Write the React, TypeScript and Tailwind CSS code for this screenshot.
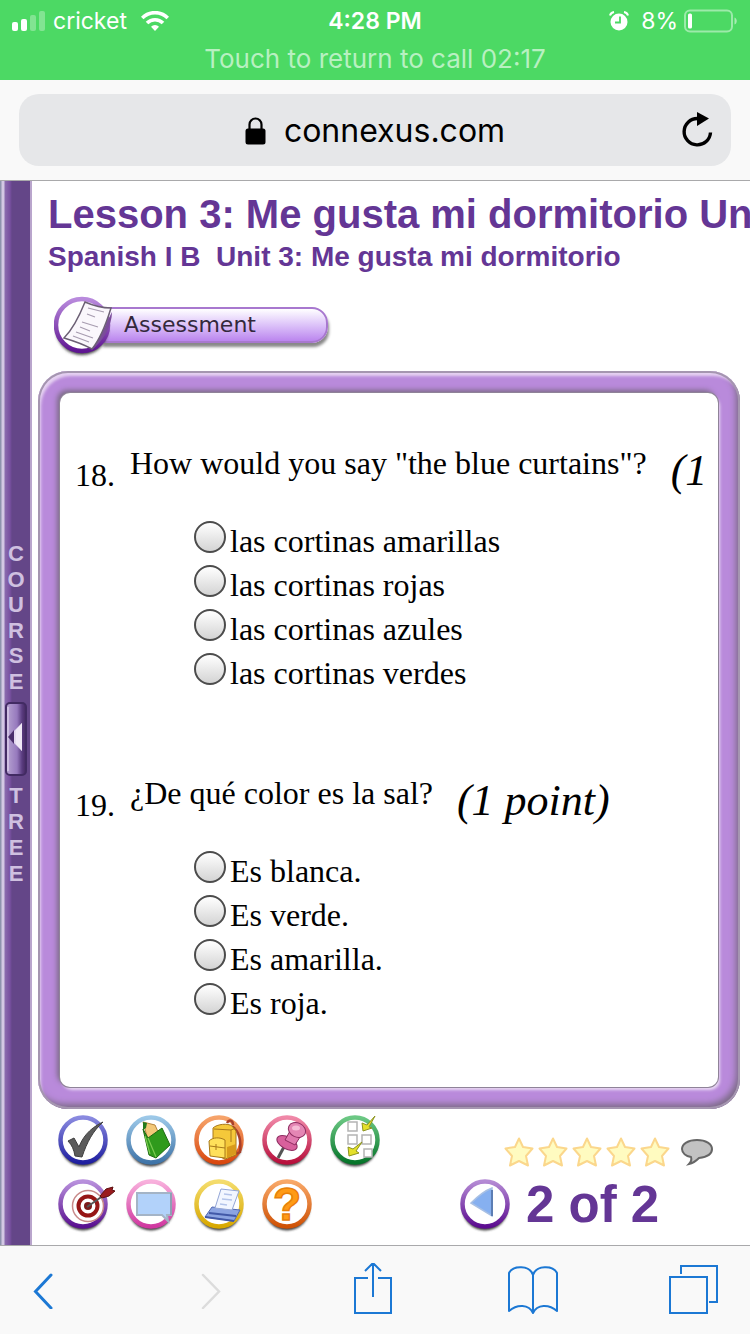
import type { ReactNode } from "react"

const questions = [
  {
    number: 18,
    text: 'How would you say "the blue curtains"?',
    points: "(1",
    options: [
      "las cortinas amarillas",
      "las cortinas rojas",
      "las cortinas azules",
      "las cortinas verdes",
    ],
  },
  {
    number: 19,
    text: "¿De qué color es la sal?",
    points: "(1 point)",
    options: ["Es blanca.", "Es verde.", "Es amarilla.", "Es roja."],
  },
]

function StatusBar() {
  return (
    <header className="bg-[#4cd964] px-3 pb-1 pt-1 font-['Inter','Liberation_Sans',sans-serif] text-white">
      <div className="grid h-8 grid-cols-3 items-center text-[23px]">
        <div className="flex items-center gap-2">
          <svg width="33" height="20" viewBox="0 0 33 20" fill="#fff">
            <rect x="0" y="11" width="6" height="9" rx="2" />
            <rect x="9" y="8" width="6" height="12" rx="2" />
            <rect x="18" y="4" width="6" height="16" rx="2" opacity="0.3" />
            <rect x="27" y="0" width="6" height="20" rx="2" opacity="0.3" />
          </svg>
          <span>cricket</span>
          <svg className="ml-1.5" width="28" height="20" viewBox="0 0 28 20" fill="none" stroke="#fff">
            <path d="M1.200 7a18 18 0 0 1 25.600 0" strokeWidth="3.600" />
            <path d="M6 12a11.300 11.300 0 0 1 16 0" strokeWidth="3.600" />
            <path d="M14 20l-4-4.200a5.600 5.600 0 0 1 8 0z" fill="#fff" stroke="none" />
          </svg>
        </div>
        <div className="text-center font-semibold">4:28 PM</div>
        <div className="flex items-center justify-end">
          <svg width="20" height="20" viewBox="0 0 20 20">
            <circle cx="10" cy="11" r="8.500" fill="#fff" />
            <path d="M1 4.500A5 5 0 0 1 5 1M19 4.500A5 5 0 0 0 15 1" stroke="#fff" strokeWidth="2" fill="none" />
            <path d="M11 5.500v6H6" stroke="#4cd964" strokeWidth="1.800" fill="none" />
          </svg>
          <span className="ml-3">8%</span>
          <svg className="ml-1.5" width="54" height="24" viewBox="0 0 54 24">
            <rect x="1" y="1.500" width="47" height="21" rx="5" fill="none" stroke="#fff" strokeOpacity="0.45" strokeWidth="2" />
            <rect x="4" y="4.500" width="4" height="15" rx="1.500" fill="#fff" />
            <path d="M50.500 8.500c3 1 3 6 0 7z" fill="#fff" opacity="0.5" />
          </svg>
        </div>
      </div>
      <div className="h-10 text-center text-[26px] leading-[46px] text-[#b8f0c1]">
        Touch to return to call 02:17
      </div>
    </header>
  )
}

function AddressBar() {
  return (
    <div className="border-b border-[#a9a9ab] bg-[#f9f9f9] px-[19px] py-3.5">
      <div className="flex h-[72px] items-center rounded-[20px] bg-[#e6e7e9] pr-[18px]">
        <div className="flex flex-1 items-center justify-center gap-[18px] pl-[50px] pt-0.5 font-['Inter','Liberation_Sans',sans-serif] text-[32px]">
          <svg width="21" height="28" viewBox="0 0 21 28">
            <path d="M4.500 13V7.500a6 6 0 0 1 12 0V13" fill="none" stroke="#000" strokeWidth="2.200" />
            <rect x="0.500" y="11.500" width="20" height="16" rx="2.500" />
          </svg>
          <span>connexus.com</span>
        </div>
        <button aria-label="Reload">
          <svg width="32" height="36" viewBox="0 0 32 36">
            <path d="M16.500 6.500A13.200 13.200 0 1 0 29.500 20.500" fill="none" stroke="#000" strokeWidth="3.400" />
            <path d="M16 0l12 6.500-12 7.500z" />
          </svg>
        </button>
      </div>
    </div>
  )
}

function VerticalWord({ word, className }: { word: string; className: string }) {
  return (
    <div className={className}>
      {word.split("").map((letter, i) => (
        <span key={i}>{letter}</span>
      ))}
    </div>
  )
}

function CourseTree() {
  return (
    <aside className="flex w-8 shrink-0 flex-col items-center justify-center border-r-2 border-[#b9a5cc] bg-[linear-gradient(to_right,#8d93ad_0_1px,#d3c8e4_2px_4px,#8a6bae_5px,#7850a0_10px,#644688_12px)] pl-0.5 pt-0.5 font-['Liberation_Sans',sans-serif] text-[22px] font-bold leading-5 text-[#cfc0e0]">
      <VerticalWord word="COURSE" className="flex h-[148px] flex-col items-center justify-between" />
      <button aria-label="Toggle course tree" className="my-2.5">
        <svg width="22" height="74" viewBox="0 0 22 74">
          <defs>
            <linearGradient id="handle">
              <stop offset="0" stopColor="#b9a6d3" />
              <stop offset="0.550" stopColor="#9679bd" />
              <stop offset="0.800" stopColor="#5a3c80" />
              <stop offset="1" stopColor="#44285f" />
            </linearGradient>
          </defs>
          <rect x="1" y="1" width="20" height="72" rx="4" fill="url(#handle)" stroke="#422b63" strokeWidth="2" />
          <path d="M3 5v64" stroke="#d8cbe8" strokeWidth="1.500" />
          <path d="M17 21v28L3 35z" fill="#e4d9ef" />
          <path d="M17 21v28L11 42V28z" fill="#f0e8f6" />
          <path d="M9 28L3 35l6 7z" fill="#4a2d6b" />
        </svg>
      </button>
      <VerticalWord word="TREE" className="flex h-[98px] flex-col items-center justify-between" />
    </aside>
  )
}

function AssessmentBadge() {
  return (
    <div className="ml-[22px] flex h-[64px] items-center font-['DejaVu_Sans',sans-serif]">
      <svg className="relative z-10" width="60" height="64" viewBox="0 0 60 64">
        <defs>
          <linearGradient id="badge" x2="0" y2="1">
            <stop offset="0" stopColor="#b98add" />
            <stop offset="1" stopColor="#5f1592" />
          </linearGradient>
          <filter id="badge-shadow" x="-20%" y="-20%" width="140%" height="140%">
            <feGaussianBlur stdDeviation="1.500" />
          </filter>
        </defs>
        <circle cx="28" cy="34" r="26" fill="#444" filter="url(#badge-shadow)" />
        <circle cx="28" cy="30" r="26" fill="#fff" stroke="url(#badge)" strokeWidth="4.500" />
        <path d="M58 17c0 14-9 29-20 38 8-11 13-25 20-38z" fill="#7a4d9a" />
        <path d="M31 7c9 4 17 6 26 6-4 13-10 30-19 41-9-5-18-8-28-11C19 34 25 22 31 7z" fill="#faf7fc" stroke="#6b5f74" strokeWidth="1.500" />
        <path d="M34 13l16 4M33 19l8 3M28 27l16 5M26 32l10 4M22 37l17 6M19 41l16 6" stroke="#a79cb0" strokeWidth="1.200" />
      </svg>
      <span className="-ml-3 flex h-9 w-[226px] items-center rounded-r-[16px] border-2 border-[#a878cf] bg-gradient-to-b from-white to-[#bb85ee] pl-[20px] text-[22px] leading-8 text-[#33283c] shadow-[1px_4px_3px_#888] mb-1">
        Assessment
      </span>
    </div>
  )
}

function Question({ number, text, points, options }: (typeof questions)[number]) {
  return (
    <fieldset>
      <legend className="flex h-[50px] w-full overflow-hidden whitespace-nowrap">
        <span className="w-[55px] shrink-0 pt-3">{number}.</span>
        <span>{text}</span>
        <i className="ml-6 pt-0.5 text-[44px] leading-[48px]">{points}</i>
      </legend>
      <div className="pl-[119px] pt-[26px]">
        {options.map((option) => (
          <label key={option} className="flex h-11 items-start gap-1">
            <input
              type="radio"
              name={`question-${number}`}
              className="h-8 w-8 shrink-0 appearance-none rounded-full border-2 border-[#4c4c4c] bg-gradient-to-b from-white to-[#d4d4d4] checked:to-[#8e8e8e]"
            />
            <span className="pt-0.5">{option}</span>
          </label>
        ))}
      </div>
    </fieldset>
  )
}

type RingProps = {
  label: string
  from: string
  to: string
  children: ReactNode
}

function RingButton({ label, from, to, children }: RingProps) {
  const id = label.toLowerCase().replace(/ /g, "-")
  return (
    <button aria-label={label} className="h-[54px] w-[52px]">
      <svg width="52" height="54" viewBox="0 0 52 54" className="overflow-visible">
        <defs>
          <linearGradient id={id} x2="0" y2="1">
            <stop offset="0" stopColor={from} />
            <stop offset="1" stopColor={to} />
          </linearGradient>
          <filter id={`${id}-shadow`} x="-20%" y="-20%" width="140%" height="140%">
            <feGaussianBlur stdDeviation="1.300" />
          </filter>
        </defs>
        <circle cx="26" cy="29.500" r="23" fill="#444" filter={`url(#${id}-shadow)`} />
        <circle cx="26" cy="26" r="22.500" fill="#fff" stroke={`url(#${id})`} strokeWidth="4.500" />
        {children}
      </svg>
    </button>
  )
}

function Tools() {
  return (
    <div className="grid grid-cols-[repeat(5,52px)] gap-x-4 gap-y-2.5">
      <RingButton label="Complete" from="#8a8ae0" to="#1f1fa0">
        <path d="M11 27l6-3 5 9c3-8 9-18 24-25-10 9-16 20-21 35l-7-1c-1-6-3-11-7-15z" fill="#5c5c5c" stroke="#3f3f3f" />
      </RingButton>
      <RingButton label="Notebook" from="#9cc8e8" to="#3f74a8">
        <path d="M18 8l12 3 4 9-11 6z" fill="#f2c879" stroke="#b5843c" />
        <path d="M18 8l4 1-1 5-3 2z" fill="#227a1c" />
        <path d="M18 15l5 9 14-10 8 17-14 13-7-3z" fill="#2f9a1c" stroke="#1e6a12" />
        <path d="M23 24l8 19M20 22l5 18" stroke="#7ccb52" strokeWidth="1.200" />
      </RingButton>
      <RingButton label="Backpack" from="#f6a36a" to="#d9480f">
        <path d="M39 12c8 6 9 15 8 26l-4 2M34 9c2-4 6-3 6 2" fill="none" stroke="#a8402a" strokeWidth="2.500" />
        <path d="M20 14c4-4 15-5 19-2l4 5v24l-11 4-12-5z" fill="#f5c83a" stroke="#a8781a" />
        <path d="M21 15l17 1 5-2M38 16v12" fill="none" stroke="#a8781a" />
        <path d="M16 27c4-4 11-4 16-1v18l-15-2z" fill="#ffe05a" stroke="#a8781a" />
        <path d="M17 32l15 2M23 30v6" stroke="#a8781a" />
        <path d="M34 33l9-3v10l-9 4z" fill="#d89a1c" />
      </RingButton>
      <RingButton label="Pinned" from="#f088a8" to="#b8103c">
        <path d="M24 31l-7 13" stroke="#555" strokeWidth="3" />
        <ellipse cx="26" cy="29" rx="11" ry="6" transform="rotate(28 26 29)" fill="#d8609c" stroke="#8e2c60" />
        <path d="M29 17l10 6-5 8-10-5z" fill="#e07aae" stroke="#8e2c60" />
        <ellipse cx="36" cy="16" rx="9" ry="7" transform="rotate(25 36 16)" fill="#e486b4" stroke="#8e2c60" />
        <ellipse cx="35" cy="14" rx="4" ry="2.500" fill="#f6bcd6" />
      </RingButton>
      <RingButton label="Checklist" from="#6cc884" to="#06752a">
        <path d="M19 8h9v9h-9zM19 21h9v9h-9zM33 21h9v9h-9zM35 35h8v8h-8z" fill="#fff" stroke="#b4b4b4" strokeWidth="1.500" />
        <path d="M33 9l5 2L46 2l-6 11 3 1-9 3zM19 33l5 2 9-7-6 9 3 2-10 3z" fill="#e4e02a" stroke="#8c9420" />
      </RingButton>
      <RingButton label="Objectives" from="#b890dc" to="#5a1090">
        <circle cx="31" cy="28" r="15.500" fill="#fff" stroke="#c88a8a" strokeWidth="1.500" />
        <circle cx="31" cy="28" r="9.500" fill="#fff" stroke="#961616" strokeWidth="4" />
        <circle cx="31" cy="28" r="4" fill="#7c1a1a" />
        <path d="M30 29l20-14" stroke="#555" strokeWidth="2" />
        <path d="M43 18l6-7 7-2-1 3 3 1-6 5-7 2z" fill="#9a1a1e" stroke="#5c1010" />
      </RingButton>
      <RingButton label="Messages" from="#f8b0dc" to="#d038a0">
        <path d="M12 15h34v22h-4l1 6-6-6H12z" fill="#b2d2fa" stroke="#a4b4c6" strokeWidth="2" />
        <path d="M46 15v22" stroke="#8f9fb4" strokeWidth="2" />
      </RingButton>
      <RingButton label="Print" from="#f4dc6c" to="#d8a800">
        <path d="M12 39l7-10 28 3-6 11z" fill="#8ca4e2" stroke="#5068b4" />
        <path d="M28 11l18 2-7 19-17-2z" fill="#f2f6ff" stroke="#94a6d6" />
        <path d="M31 16l8 1M29 21l10 1M27 26l7 1" stroke="#b4c4ea" strokeWidth="1.500" />
        <path d="M12 39l29 4M16 35l27 3" stroke="#4259a8" strokeWidth="2" />
      </RingButton>
      <RingButton label="Help" from="#f8a868" to="#cf5206">
        <text
          x="26"
          y="42"
          textAnchor="middle"
          fill="#ff9a16"
          stroke="#e88008"
          strokeWidth="1.500"
          className="font-['Liberation_Sans',sans-serif] text-[46px] font-bold"
        >
          ?
        </text>
      </RingButton>
    </div>
  )
}

function Pager() {
  return (
    <div className="pt-[22px]">
      <div className="flex items-center gap-1 pl-[45px]">
        {[1, 2, 3, 4, 5].map((n) => (
          <button key={n} aria-label={`Rate ${n}`}>
            <svg width="30" height="32" viewBox="0 0 30 32">
              <path
                d="M15 2.500l4 8.500 9.500 1.500-6.500 7.500 2 9.500-9-4.500-9 4.500 2-9.500-6.500-7.500L11 11z"
                fill="#fffbc0"
                stroke="#fbd78c"
                strokeWidth="2"
                strokeLinejoin="round"
              />
            </svg>
          </button>
        ))}
        <button aria-label="Comment" className="ml-1.5">
          <svg width="34" height="28" viewBox="0 0 34 28">
            <path
              d="M17 2C8 2 2 6 2 11c0 4 4 7 9 8 1 3 0 5-2 7 5-1 8-4 10-6 8-1 13-4 13-9 0-5-6-9-15-9z"
              fill="#c2c2c2"
              stroke="#666"
              strokeWidth="2"
            />
          </svg>
        </button>
      </div>
      <div className="flex items-center gap-[15px] pt-2.5">
        <RingButton label="Previous page" from="#b48ad4" to="#5c0c90">
          <path d="M33 10v28L12 25c6-6 13-12 21-15z" fill="#86b0f0" stroke="#a8c0e4" strokeWidth="1.500" />
          <path d="M33 12v26" stroke="#5c7eb4" strokeWidth="2" />
        </RingButton>
        <span className="text-[51px] font-bold leading-[54px] text-[#643695]">2 of 2</span>
      </div>
    </div>
  )
}

function Toolbar() {
  return (
    <nav className="flex h-[89px] items-center justify-between border-t border-[#a9a9ab] bg-[#f9f9f9] pl-[33px] pr-8 text-[#1c78d4]">
      <button aria-label="Back" className="w-[57px]">
        <svg width="20" height="38" viewBox="0 0 20 38" fill="none" stroke="currentColor" strokeWidth="3" strokeLinecap="round">
          <path d="M18 4L2.500 20.500 18 37" />
        </svg>
      </button>
      <button aria-label="Forward" className="w-10">
        <svg width="20" height="38" viewBox="0 0 20 38" fill="none" stroke="#dcdcdc" strokeWidth="2.500" strokeLinecap="round">
          <path d="M2 4l16 16.500L2 37" />
        </svg>
      </button>
      <button aria-label="Share" className="w-[42px]">
        <svg width="40" height="54" viewBox="0 0 40 54" fill="none" stroke="currentColor" strokeWidth="2">
          <path d="M15 15H2v35h36V15H25M20 34V0M12 8l8-8 8 8" />
        </svg>
      </button>
      <button aria-label="Bookmarks">
        <svg width="52" height="50" viewBox="0 0 52 50" fill="none" stroke="currentColor" strokeWidth="2" strokeLinejoin="round">
          <path d="M27 10C24 0 7 0 3 8v38c8-7 20-7 24 2 4-9 16-9 24-2V8C47 0 30 0 27 10zM27 10v38" />
        </svg>
      </button>
      <button aria-label="Tabs">
        <svg width="49" height="50" viewBox="0 0 49 50" fill="none" stroke="currentColor" strokeWidth="2">
          <path d="M1 12h37v36H1zM12 9V1h36v36h-8" />
        </svg>
      </button>
    </nav>
  )
}

export default function App() {
  return (
    <div className="flex min-h-screen flex-col overflow-hidden bg-white text-black">
      <StatusBar />
      <AddressBar />
      <div className="flex flex-1">
        <CourseTree />
        <main className="min-w-0 flex-1 font-['Liberation_Sans',sans-serif]">
          <div className="overflow-hidden whitespace-nowrap pl-4 pt-2.5 font-bold text-[#643695]">
            <h1 className="text-[40px] leading-[46px]">Lesson 3: Me gusta mi dormitorio Un</h1>
            <h2 className="whitespace-pre pt-1 text-[28px] leading-8">
              {"Spanish I B  Unit 3: Me gusta mi dormitorio"}
            </h2>
          </div>
          <div className="pb-3 pt-[22px]">
            <AssessmentBadge />
          </div>
          <form className="ml-1.5 mr-2.5 rounded-[30px] bg-[#b98adb] px-[22px] pb-[22px] pt-[22px] shadow-[inset_0_0_0_2px_#a596b0,inset_3px_5px_3px_#e6d2f2,inset_-4px_-5px_6px_#7d6c88]">
            <div className="flex flex-col gap-[78px] rounded-[10px] bg-white pb-[60px] pl-[15px] pr-3 pt-[52px] font-['Liberation_Serif',serif] text-[32px] leading-9 shadow-[0_0_0_1px_#8f8398,-3px_-3px_5px_#7d6c88,2px_3px_3px_#ecdcf6]">
              {questions.map((question) => (
                <Question key={question.number} {...question} />
              ))}
            </div>
          </form>
          <div className="flex items-start justify-between pb-2.5 pl-[25px] pr-9 pt-[5px]">
            <Tools />
            <Pager />
          </div>
        </main>
      </div>
      <Toolbar />
    </div>
  )
}
